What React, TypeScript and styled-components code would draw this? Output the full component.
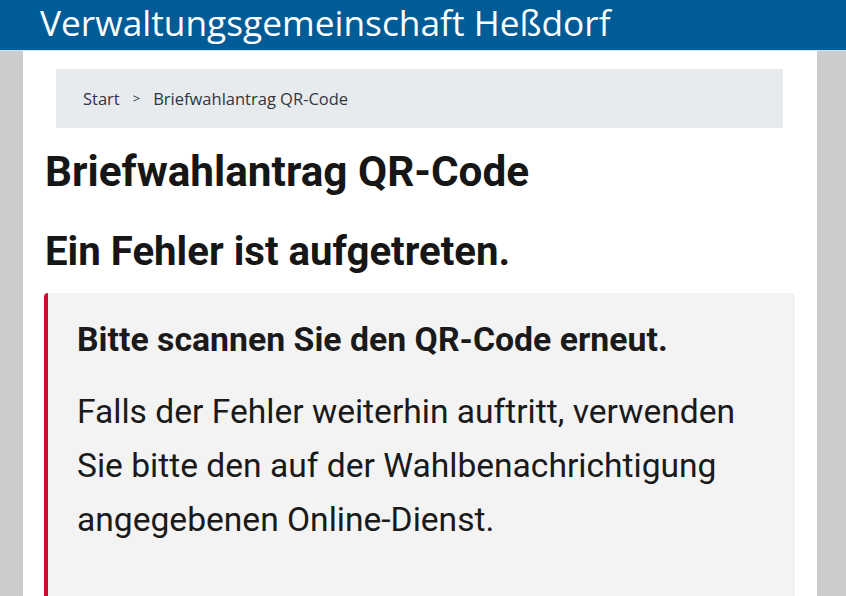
import React from 'react'
import styled, { createGlobalStyle } from 'styled-components'

const GlobalStyle = createGlobalStyle`
  html, body {
    margin: 0;
    padding: 0;
    background: #cccccc;
    height: 100%;
  }
  body {
    font-family: Roboto, "Liberation Sans", sans-serif;
    color: #1a1a1a;
  }
`

const Page = styled.div`
  display: flex;
  flex-direction: column;
  min-height: 596px;
`

const Header = styled.header`
  background: #005c96;
  height: 50px;
  border-bottom: 1px solid #cfe3f1;
  display: flex;
  align-items: flex-start;
  padding-left: 40px;
`

const SiteTitle = styled.h1`
  margin: 0;
  font-family: "Open Sans", sans-serif;
  font-weight: 400;
  font-size: 35.3px;
  line-height: 44px;
  color: #ffffff;
  white-space: nowrap;
`

const Main = styled.main`
  flex: 1;
  background: #ffffff;
  margin: 0 29px 0 23px;
  padding: 18px 22px 0 21px;
`

const Breadcrumb = styled.nav`
  background: #e8ebee;
  margin: 0 12px 0 12px;
  height: 59px;
  display: flex;
  align-items: center;
  padding-left: 27px;
  font-family: "Open Sans", sans-serif;
  font-size: 16.5px;
  color: #2c3844;
`

const Crumb = styled.span``

const Separator = styled.span`
  margin: 0 13px 0 13px;
  font-size: 13px;
  position: relative;
  top: -1px;
`

const Heading = styled.h2<{ $size: number; $gap: number }>`
  margin: ${(p) => p.$gap}px 0 0 1px;
  font-family: Roboto, sans-serif;
  font-weight: 700;
  font-size: ${(p) => p.$size}px;
  line-height: 48px;
  color: #161616;
`

const ErrorBox = styled.section`
  margin-top: 17px;
  background: #f3f3f3;
  border-left: 4px solid #c8102e;
  border-radius: 4px;
  padding: 27px 24px 80px 29px;
`

const ErrorTitle = styled.p`
  margin: 0;
  font-family: Roboto, sans-serif;
  font-weight: 700;
  font-size: 33.8px;
  line-height: 40px;
  color: #1a1a1a;
`

const ErrorText = styled.p`
  margin: 25px 0 0 0;
  font-family: Roboto, sans-serif;
  font-weight: 400;
  font-size: 33.6px;
  line-height: 54px;
  color: #1a1a1a;
`

export default function App() {
  return (
    <>
      <GlobalStyle />
      <Page>
        <Header>
          <SiteTitle>Verwaltungsgemeinschaft Heßdorf</SiteTitle>
        </Header>
        <Main>
          <Breadcrumb>
            <Crumb>Start</Crumb>
            <Separator>&gt;</Separator>
            <Crumb>Briefwahlantrag QR-Code</Crumb>
          </Breadcrumb>
          <Heading $size={42.3} $gap={20}>Briefwahlantrag QR-Code</Heading>
          <Heading $size={40.2} $gap={32}>Ein Fehler ist aufgetreten.</Heading>
          <ErrorBox>
            <ErrorTitle>Bitte scannen Sie den QR-Code erneut.</ErrorTitle>
            <ErrorText>
              Falls der Fehler weiterhin auftritt, verwenden Sie bitte den auf der
              Wahlbenachrichtigung angegebenen Online-Dienst.
            </ErrorText>
          </ErrorBox>
        </Main>
      </Page>
    </>
  )
}
